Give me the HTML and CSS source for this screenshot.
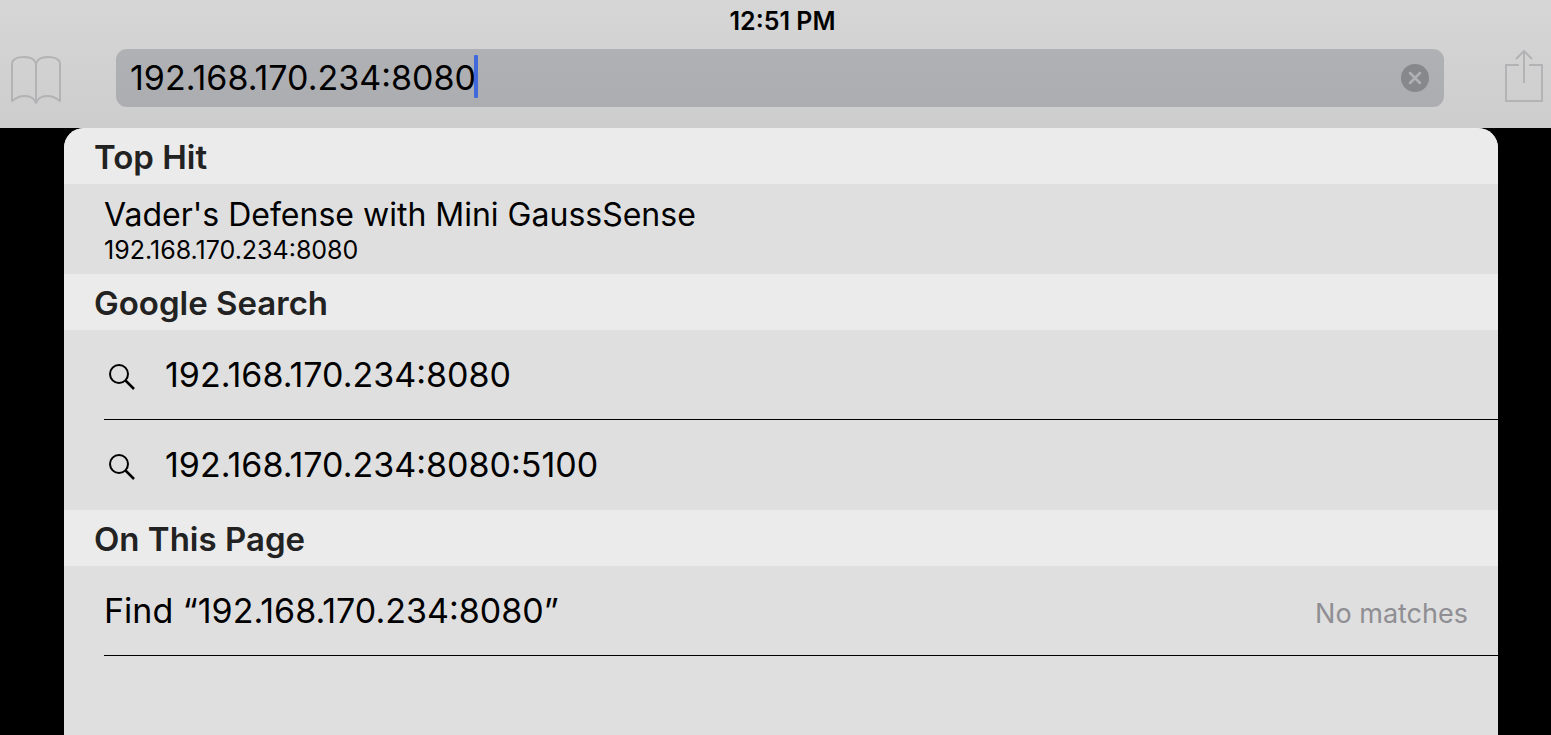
FILE: index.html
```
<!DOCTYPE html>
<html lang="en">
<head>
<meta charset="utf-8">
<meta name="viewport" content="width=device-width, initial-scale=1">
<title>Search</title>
<link rel="stylesheet" href="styles.css">
</head>
<body>
<header class="chrome">
  <time class="clock">12:51 PM</time>
  <div class="toolbar">
    <button class="tool" aria-label="Bookmarks">
      <svg width="52" height="52" viewBox="0 0 52 52" fill="none" stroke="currentColor" stroke-width="2" stroke-linejoin="round"><path d="M26 12C25 7 20 5 14 5 8 5 3 7 2 11V49C9 43 22 41 26 51 30 41 43 43 50 49V11C49 7 44 5 38 5 32 5 27 7 26 12V51"/></svg>
    </button>
    <form class="address">
      <label class="sizer"><span class="measure">192.168.170.234:8080</span><input class="url" type="text" size="1" value="192.168.170.234:8080" aria-label="Address"></label>
      <span class="caret"></span>
      <button class="clear" type="reset" aria-label="Clear">
        <svg width="28" height="28" viewBox="0 0 28 28"><circle cx="14" cy="14" r="14" fill="#87888b"/><path d="M9 9l10 10M19 9L9 19" stroke="#b0b1b5" stroke-width="2.500" stroke-linecap="round"/></svg>
      </button>
    </form>
    <button class="tool" aria-label="Share">
      <svg width="40" height="58" viewBox="0 0 40 58" fill="none" stroke="currentColor" stroke-width="2"><path d="M15 16H2V52H38V16H25M20 34V2M12 10L20 2L28 10"/></svg>
    </button>
  </div>
</header>
<main class="results">
  <h2 class="heading">Top Hit</h2>
  <a class="hit" href="#"><span class="name">Vader's Defense with Mini GaussSense</span><span class="sub">192.168.170.234:8080</span></a>
  <h2 class="heading">Google Search</h2>
  <a class="row" href="#"><svg class="lens" width="28" height="28" viewBox="0 0 28 28" fill="none" stroke="#000" stroke-width="2"><circle cx="11" cy="11" r="9"/><path d="M17.500 17.500L26 26" stroke-width="2.500"/></svg><span class="title">192.168.170.234:8080</span></a>
  <a class="row last" href="#"><svg class="lens" width="28" height="28" viewBox="0 0 28 28" fill="none" stroke="#000" stroke-width="2"><circle cx="11" cy="11" r="9"/><path d="M17.500 17.500L26 26" stroke-width="2.500"/></svg><span class="title">192.168.170.234:8080:5100</span></a>
  <h2 class="heading">On This Page</h2>
  <a class="row" href="#"><span class="title">Find “192.168.170.234:8080”</span><span class="note">No matches</span></a>
</main>
</body>
</html>
```
FILE: styles.css
```
* { box-sizing: border-box; }
body { margin: 0; min-height: 100vh; display: flex; flex-direction: column; background: #000; color: #000; font-family: Inter, "Liberation Sans", sans-serif; }
button { padding: 0; border: 0; background: none; color: inherit; display: flex; }
a { color: inherit; text-decoration: none; }
.chrome { padding-top: 6px; background: linear-gradient(#d6d6d6, #cdcdcd); }
.clock { display: block; padding-left: 14px; text-align: center; font-size: 25px; line-height: 30px; font-weight: 600; }
.toolbar { display: flex; align-items: center; padding: 13px 7px 21px 10px; }
.tool { color: #b3b3b5; }
.address { flex: 1; display: flex; align-items: center; height: 58px; margin: 0 60px 0 54px; padding: 0 15px 0 14px; border-radius: 11px; background: linear-gradient(#b0b1b5, #acadb1); }
.sizer { display: grid; font-size: 34px; line-height: 42px; }
.measure, .url { grid-area: 1 / 1; }
.measure { visibility: hidden; }
.url { width: 100%; min-width: 0; padding: 0; border: 0; outline: 0; background: none; color: #000; font: inherit; }
.caret { width: 4px; height: 43px; margin: 0 0 3px -2px; border-radius: 1px; background: #4169dc; }
.clear { margin-left: auto; }
.results { flex: 1; margin: 0 53px 0 64px; border-radius: 20px 20px 0 0; overflow: hidden; background: #dfdfdf; }
.heading { margin: 0; padding: 2px 30px 0; font-size: 33px; line-height: 54px; font-weight: 600; color: #222; background: #ebebeb; }
.hit { display: block; padding: 11px 40px 9px; }
.name, .sub { display: block; }
.name { font-size: 32px; line-height: 40px; }
.title { font-size: 34px; line-height: 42px; }
.sub { font-size: 25px; line-height: 30px; }
.row { display: flex; align-items: center; height: 90px; margin-left: 40px; border-bottom: 1px solid #000; }
.last { border: 0; }
.lens { margin: 4px 29px 0 4px; }
.note { margin: 6px 30px 0 auto; font-size: 27px; line-height: 34px; color: #8e8e93; }
```
